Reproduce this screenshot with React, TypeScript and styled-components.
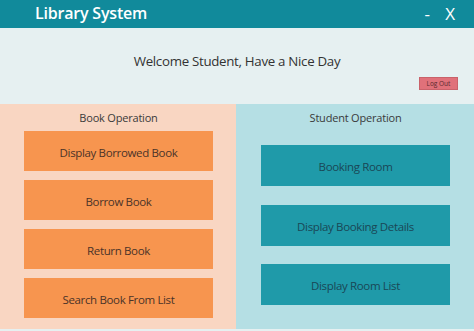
import React from "react";
import styled, { createGlobalStyle } from "styled-components";

const Global = createGlobalStyle`
  html, body { margin: 0; padding: 0; }
  body { font-family: "Open Sans", "Noto Sans", sans-serif; background: #e6f0f1; }
`;

const Window = styled.div`
  width: 474px;
  height: 331px;
  display: flex;
  flex-direction: column;
  background: #e6f0f1;
  overflow: hidden;
`;

const TitleBar = styled.div`
  height: 28px;
  box-sizing: border-box;
  padding: 0 19px 2px 35px;
  flex: none;
  background: #118a9b;
  display: flex;
  align-items: center;
  color: #ffffff;
`;

const Title = styled.div`
  font-size: 16px;
  font-weight: 600;
  letter-spacing: -0.2px;
  flex: 1;
`;

const WinButton = styled.span<{ $w: number }>`
  width: ${(p) => p.$w}px;
  text-align: right;
  font-size: 17px;
  font-weight: 400;
`;

const Welcome = styled.div`
  height: 76px;
  flex: none;
  display: flex;
  flex-direction: column;
  align-items: center;
  position: relative;
`;

const WelcomeText = styled.div`
  margin-top: 24px;
  font-size: 13.3px;
  letter-spacing: -0.3px;
  color: #333;
  line-height: 18px;
`;

const LogOut = styled.button`
  position: absolute;
  left: 419px;
  top: 49px;
  width: 39px;
  height: 13px;
  padding: 0;
  background: #e0717a;
  border: 1px solid #c9626a;
  color: #5a2a2e;
  font-family: "Open Sans", sans-serif;
  font-size: 6.5px;
  line-height: 11px;
`;

const Panels = styled.div`
  display: flex;
  height: 225px;
  flex: none;
`;

const Panel = styled.div<{ $bg: string; $w: number; $pl: number }>`
  width: ${(p) => p.$w}px;
  background: ${(p) => p.$bg};
  display: flex;
  flex-direction: column;
  align-items: flex-start;
  padding-left: ${(p) => p.$pl}px;
  box-sizing: border-box;
`;

const Heading = styled.div`
  width: 189px;
  text-align: center;
  margin-top: 7px;
  line-height: 14px;
  font-size: 11px;
  letter-spacing: -0.2px;
  color: #3a3a3a;
`;

const ButtonList = styled.div<{ $gap: number; $top: number }>`
  display: flex;
  flex-direction: column;
  gap: ${(p) => p.$gap}px;
  margin-top: ${(p) => p.$top}px;
`;

const ActionButton = styled.button<{ $bg: string; $fg: string; $h: number }>`
  width: 189px;
  height: ${(p) => p.$h}px;
  border: none;
  padding: 2px 0 0;
  background: ${(p) => p.$bg};
  color: ${(p) => p.$fg};
  font-family: "Open Sans", "Noto Sans", sans-serif;
  font-size: 11.5px;
  letter-spacing: -0.35px;
`;

const book = ["Display Borrowed Book", "Borrow Book", "Return Book", "Search Book From List"];
const student = ["Booking Room", "Display Booking Details", "Display Room List"];

export default function App() {
  return (
    <Window>
      <Global />
      <TitleBar>
        <Title>Library System</Title>
        <WinButton $w={10}>-</WinButton>
        <WinButton $w={25}>X</WinButton>
      </TitleBar>
      <Welcome>
        <WelcomeText>Welcome Student, Have a Nice Day</WelcomeText>
        <LogOut>Log Out</LogOut>
      </Welcome>
      <Panels>
        <Panel $bg="#f9d6c2" $w={236} $pl={24}>
          <Heading>Book Operation</Heading>
          <ButtonList $gap={9} $top={6}>
            {book.map((b) => (
              <ActionButton key={b} $bg="#f7954f" $fg="#4a3328" $h={40}>
                {b}
              </ActionButton>
            ))}
          </ButtonList>
        </Panel>
        <Panel $bg="#b5dfe4" $w={238} $pl={25}>
          <Heading>Student Operation</Heading>
          <ButtonList $gap={18.5} $top={20}>
            {student.map((b) => (
              <ActionButton key={b} $bg="#1f9aa9" $fg="#1a4756" $h={41}>
                {b}
              </ActionButton>
            ))}
          </ButtonList>
        </Panel>
      </Panels>
    </Window>
  );
}
